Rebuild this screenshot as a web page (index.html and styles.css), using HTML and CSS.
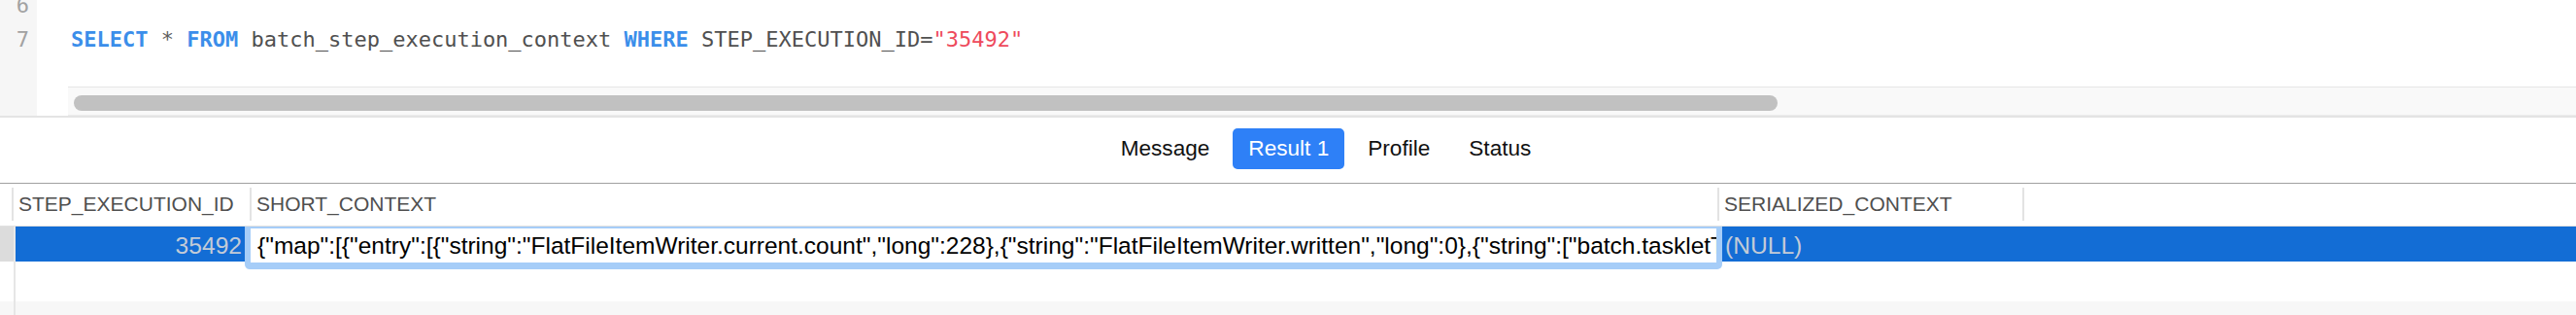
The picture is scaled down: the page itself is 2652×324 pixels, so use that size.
FILE: index.html
```html
<!DOCTYPE html>
<html>
<head>
<meta charset="utf-8">
<link rel="stylesheet" href="styles.css">
</head>
<body>
<div class="editor">
  <div class="gutter">
    <div class="gutter-lines">
      <div class="ln">6</div>
      <div class="ln">7</div>
    </div>
  </div>
  <div class="code">
    <div class="code-lines">
      <div class="line"></div>
      <div class="line"><span class="kw">SELECT</span> <span class="op">*</span> <span class="kw">FROM</span> batch_step_execution_context <span class="kw">WHERE</span> STEP_EXECUTION_ID=<span class="str">"35492"</span></div>
    </div>
    <div class="hscroll"><div class="thumb"></div></div>
  </div>
</div>

<div class="tabs">
  <div class="tab">Message</div>
  <div class="tab active">Result 1</div>
  <div class="tab">Profile</div>
  <div class="tab">Status</div>
</div>

<div class="grid">
  <div class="row head">
    <div class="rowhdr"></div>
    <div class="hcell c-id">STEP_EXECUTION_ID</div>
    <div class="hcell c-short">SHORT_CONTEXT</div>
    <div class="hcell c-ser">SERIALIZED_CONTEXT</div>
    <div class="hcell c-fill"></div>
  </div>
  <div class="row data selected">
    <div class="rowhdr"></div>
    <div class="cell c-id num">35492</div>
    <div class="cell c-short">
      <div class="cell-editor"><div class="editor-input">{"map":[{"entry":[{"string":"FlatFileItemWriter.current.count","long":228},{"string":"FlatFileItemWriter.written","long":0},{"string":["batch.taskletType","org.springframework.batch.core.step.item.ChunkOrientedTasklet"]}]}]}</div></div>
    </div>
    <div class="cell c-ser null">(NULL)</div>
    <div class="cell c-fill"></div>
  </div>
  <div class="row empty">
    <div class="rowhdr"></div>
    <div class="cell c-fill"></div>
  </div>
  <div class="row empty stripe">
    <div class="rowhdr"></div>
    <div class="cell c-fill"></div>
  </div>
</div>
</body>
</html>
```

FILE: styles.css
```css
* { box-sizing: border-box; }
html, body { margin: 0; padding: 0; background: #ffffff; }
body { width: 2652px; height: 324px; overflow: hidden; font-family: "Liberation Sans", Arial, sans-serif; }

/* ---------- SQL editor ---------- */
.editor {
  display: flex;
  height: 121px;
  border-bottom: 2px solid #e4e4e4;
}
.gutter {
  width: 38px;
  background: #f6f6f6;
  overflow: hidden;
}
.gutter-lines, .code-lines {
  margin-top: -12px;
}
.ln, .line {
  height: 35px;
  line-height: 35px;
  font-family: "DejaVu Sans Mono", "Liberation Mono", monospace;
  font-size: 22px;
  white-space: pre;
}
.ln {
  text-align: right;
  padding-right: 8px;
  color: #a2a2a2;
}
.code {
  flex: 1;
  display: flex;
  flex-direction: column;
  overflow: hidden;
}
.code-lines { flex: 1; overflow: hidden; }
.line { padding-left: 35px; color: #505050; }
.kw { color: #3b8eea; font-weight: bold; }
.op { color: #606060; }
.str { color: #ee4a5c; }

.hscroll {
  margin-left: 32px;
  height: 30px;
  background: #f9f9f9;
  border-top: 1px solid #e6e6e6;
  border-bottom: 1px solid #ececec;
  padding: 8px 0 0 6px;
}
.thumb {
  width: 1754px;
  height: 16px;
  border-radius: 8px;
  background: #c1c1c1;
}

/* ---------- result tabs ---------- */
.tabs {
  display: flex;
  justify-content: center;
  align-items: flex-start;
  gap: 8px;
  height: 68px;
  padding: 11px 0 0 78px;
  border-bottom: 1px solid #a0a0a0;
}
.tab {
  height: 42px;
  padding: 1px 16px 0;
  line-height: 40px;
  font-size: 22.6px;
  color: #111111;
  border-radius: 5px;
}
.tab.active {
  background: #2e80f7;
  color: #ffffff;
}

/* ---------- data grid ---------- */
.row { display: flex; }
.row.head {
  height: 44px;
  border-bottom: 1px solid #e2e2e2;
  align-items: stretch;
}
.head .rowhdr { width: 12px; }
.hcell {
  margin: 4px 0 5px;
  border-left: 2px solid #e3e3e3;
  padding-left: 5px;
  font-size: 21px;
  line-height: 34px;
  color: #4f4f4f;
  white-space: nowrap;
  overflow: hidden;
}
.head .c-id { width: 245px; }
.head .c-short { width: 1511px; }
.head .c-ser { width: 314px; }
.head .c-fill { flex: 1; }

.row.data { height: 36px; }
.data .rowhdr {
  width: 16px;
  background: #dcdcdc;
  border-right: 2px solid #e8e8e8;
}
.selected { background: #136dd5; }
.cell {
  font-size: 24.6px;
  line-height: 33px;
  padding-top: 3px;
  white-space: nowrap;
}
.data .c-id { width: 241px; text-align: right; padding-right: 8px; }
.data .c-short { width: 1511px; position: relative; }
.data .c-ser { width: 314px; padding-left: 8px; }
.data .c-fill { flex: 1; }
.num, .null { color: #c3cbd7; }

.cell-editor {
  position: absolute;
  left: -5px;
  right: -5px;
  top: 0;
  bottom: -8px;
  background: #a6cdf8;
  border-radius: 0 0 5px 5px;
  padding: 2px 6px 7px 6px;
}
.editor-input {
  height: 35px;
  background: #ffffff;
  padding-left: 7px;
  line-height: 35px;
  font-size: 24.5px;
  color: #000000;
  overflow: hidden;
  white-space: nowrap;
}

.row.empty { height: 41px; }
.row.empty.stripe { height: 20px; background: #f7f7f7; }
.empty .rowhdr {
  width: 16px;
  border-right: 2px solid #e6e6e6;
}
```
